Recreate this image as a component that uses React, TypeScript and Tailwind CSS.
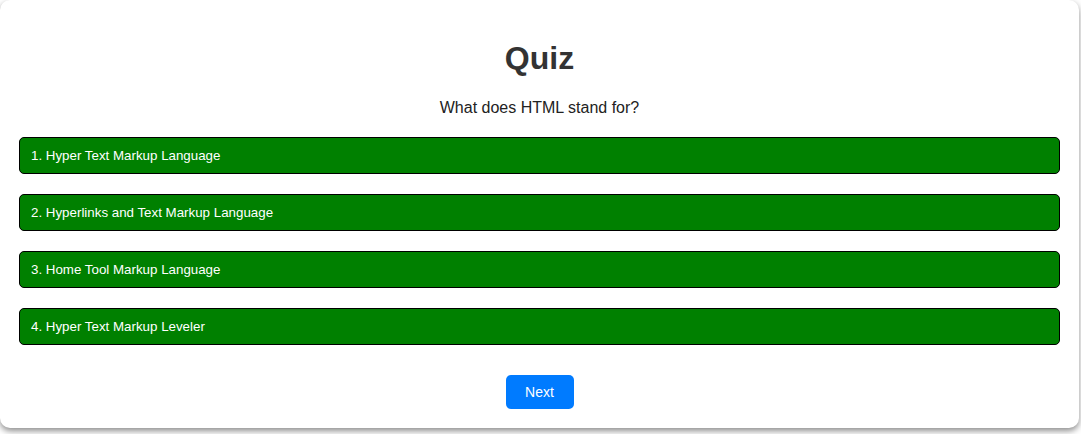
import * as React from 'react'

const options = [
  'Hyper Text Markup Language',
  'Hyperlinks and Text Markup Language',
  'Home Tool Markup Language',
  'Hyper Text Markup Leveler',
]

export default function App() {
  return (
    <div className="min-h-[434px] w-[1081px] bg-white font-['Liberation_Sans',Arial,sans-serif]">
      <div className="w-[1079px] rounded-[10px] bg-white px-[19px] pb-[19px] pt-[40px] shadow-[0_3px_6px_rgba(0,0,0,0.45)]">
        <h1 className="text-center text-[32px] font-bold leading-[37px] text-[#333]">Quiz</h1>
        <p className="mt-[22px] text-center text-[16px] leading-[18px] text-[#222]">What does HTML stand for?</p>

        <div className="mt-[20px] flex flex-col gap-[20px]">
          {options.map((opt, i) => (
            <button
              key={i}
              className="flex h-[37px] w-full items-center rounded-[5px] border border-black bg-[#008000] px-[11px] text-left text-[13.33px] text-white"
            >
              {i + 1}. {opt}
            </button>
          ))}
        </div>

        <div className="mt-[30px] flex justify-center">
          <button className="h-[34px] w-[68px] rounded-[5px] bg-[#007bff] text-[14px] text-white">Next</button>
        </div>
      </div>
    </div>
  )
}
